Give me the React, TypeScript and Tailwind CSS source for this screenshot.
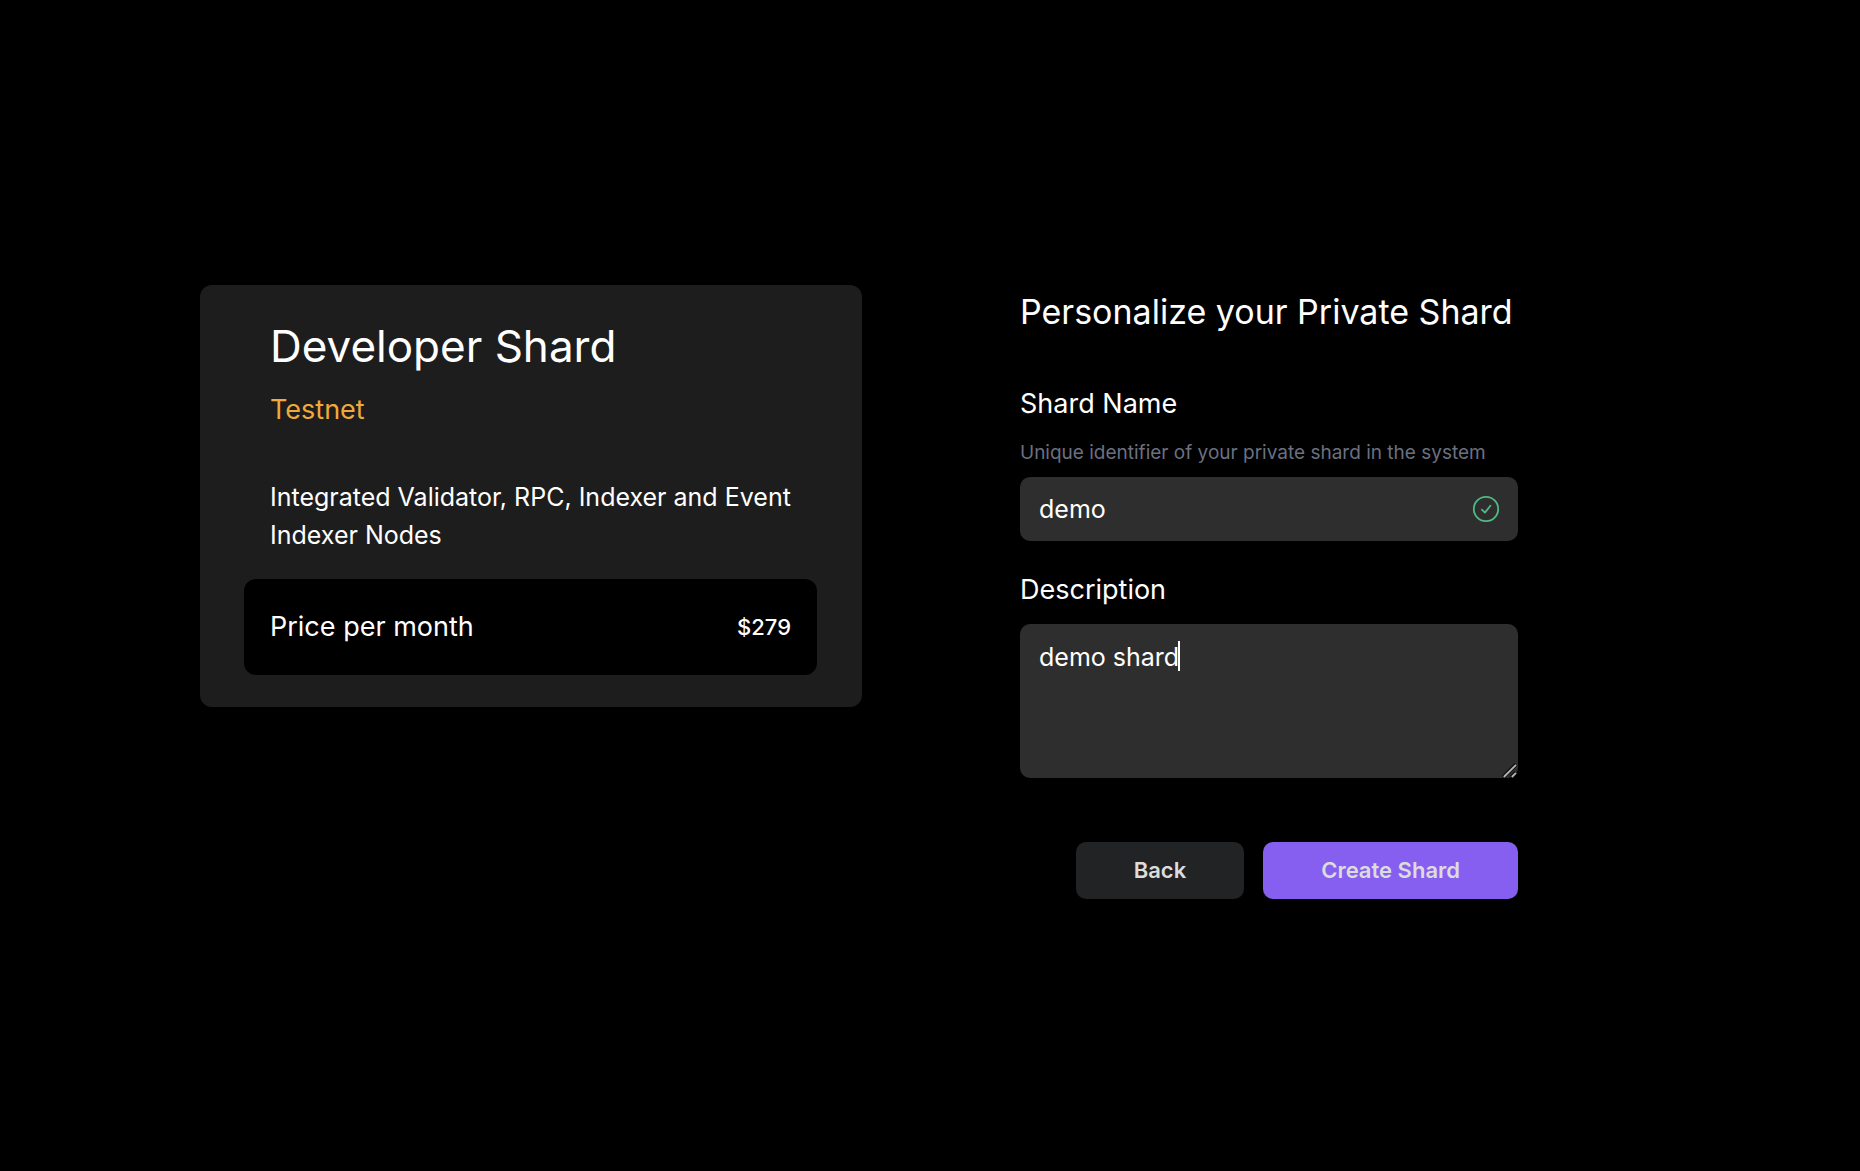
const CheckCircle = () => (
  <svg viewBox="0 0 28 28" fill="none" stroke="currentColor" aria-hidden="true" className="size-7">
    <circle cx="14" cy="14" r="12.2" strokeWidth="1.8" />
    <path d="M9.9 14.6 12.9 17.6 18.4 10.8" strokeWidth="1.8" strokeLinecap="round" strokeLinejoin="round" />
  </svg>
);

const ResizeGrip = () => (
  <svg viewBox="0 0 16 16" fill="none" aria-hidden="true" className="size-4">
    <path d="M1.2 15.2 14 2.4M9.2 15.2 14 10.4" stroke="#101010" strokeWidth="4" />
    <path d="M1.8 15 14 2.8M9.8 15 14 10.8" stroke="#b4b4b4" strokeWidth="1.8" />
  </svg>
);

const PlanCard = () => (
  <section className="rounded-xl bg-[#1d1d1d] pt-[31px] pr-[45px] pb-8 pl-11">
    <div className="pl-[26px]">
      <h1 className="text-[44px] leading-[60px]">Developer Shard</h1>
      <p className="mt-3.5 text-[27px] leading-10 text-[#f0a93b]">Testnet</p>
      <p className="mt-12 text-[25px] leading-[38px]">Integrated Validator, RPC, Indexer and Event Indexer Nodes</p>
    </div>
    <div className="mt-[25px] flex h-24 items-center justify-between rounded-xl bg-black px-[26px]">
      <span className="text-[27px] leading-10">Price per month</span>
      <span className="text-[22px] leading-8 font-medium">$279</span>
    </div>
  </section>
);

const ShardForm = () => (
  <form onSubmit={(e) => e.preventDefault()}>
    <h2 className="text-[34px] leading-[54px]">Personalize your Private Shard</h2>

    <label htmlFor="shard-name" className="mt-[45px] block text-[27px] leading-10">Shard Name</label>
    <p id="shard-name-hint" className="mt-[15px] text-[19px] leading-7 text-[#6b7080]">Unique identifier of your private shard in the system</p>
    <div className="relative mt-2.5">
      <input
        id="shard-name"
        aria-describedby="shard-name-hint"
        defaultValue="demo"
        className="block h-16 w-full rounded-[10px] bg-[#2e2e2e] pr-14 pl-[19px] text-[25px] outline-none"
      />
      <span className="pointer-events-none absolute inset-y-0 right-[18px] flex items-center text-[#4fba84]">
        <CheckCircle />
      </span>
    </div>

    <label htmlFor="description" className="mt-[29px] block text-[27px] leading-10">Description</label>
    <div className="relative mt-3.5">
      <textarea
        id="description"
        defaultValue="demo shard"
        className="block h-[154px] w-full resize-none rounded-[10px] bg-[#2e2e2e] px-[19px] py-[14px] text-[25px] leading-[38px] outline-none"
      />
      <span className="pointer-events-none absolute top-[17px] left-[158px] h-[30px] w-0.5 bg-white" />
      <span className="pointer-events-none absolute right-0 bottom-0">
        <ResizeGrip />
      </span>
    </div>

    <div className="mt-16 flex justify-end gap-[19px] text-[22px] font-semibold text-[#dcdcdc]">
      <button type="button" className="h-[57px] rounded-[10px] bg-[#222325] px-[58px]">Back</button>
      <button type="submit" className="h-[57px] rounded-[10px] bg-[#865ff0] px-[58px]">Create Shard</button>
    </div>
  </form>
);

export default function App() {
  return (
    <main className="grid min-h-screen grid-cols-[662fr_498fr] items-start gap-x-[158px] bg-black pt-[285px] pr-[342px] pl-[200px] font-['Inter',sans-serif] text-white">
      <PlanCard />
      <ShardForm />
    </main>
  );
}
